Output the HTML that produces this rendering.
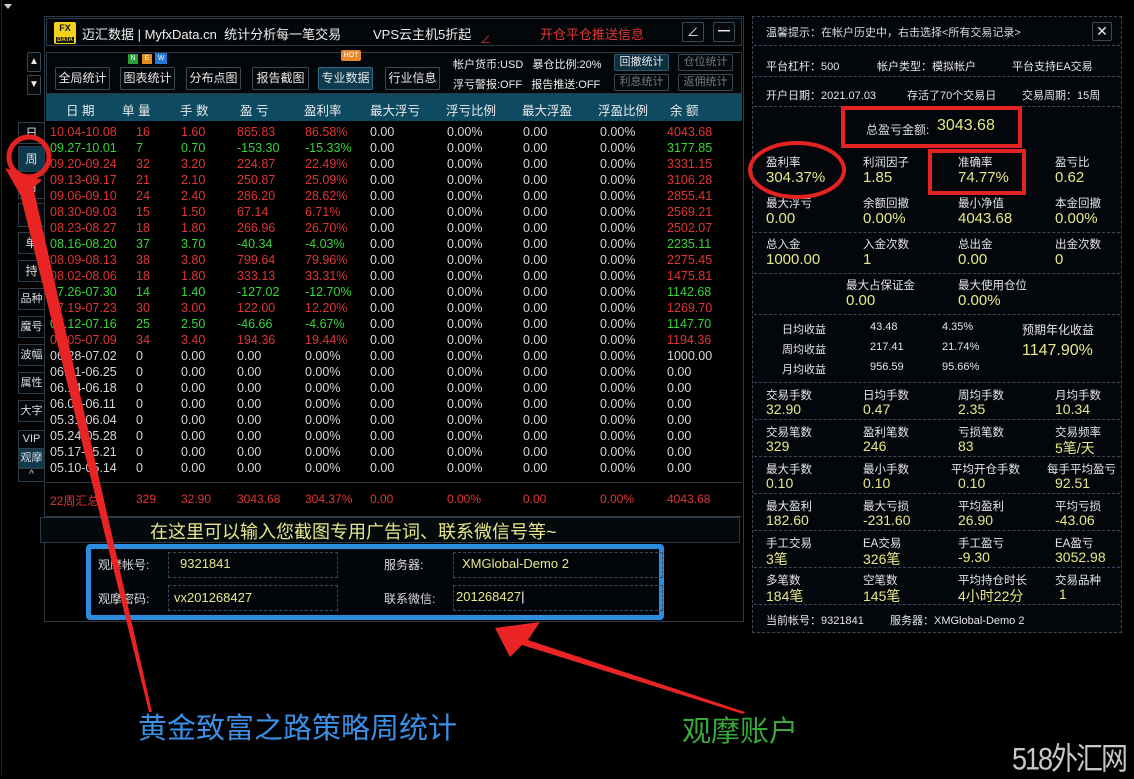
<!DOCTYPE html>
<html><head><meta charset="utf-8">
<style>
*{margin:0;padding:0;box-sizing:border-box}
body{width:1134px;height:775px;background:#000;position:relative;overflow:hidden;font-family:"Liberation Sans","Noto Sans CJK SC",sans-serif;color:#ddd}
.a{position:absolute;white-space:nowrap}
.btn{position:absolute;border:1px solid #3a4a55;background:#06090c;color:#e8e8e8;font-size:12px;text-align:center;border-radius:2px;white-space:nowrap}
.sb{position:absolute;left:18px;width:27px;border:1px solid #2f3d48;background:#05080b;color:#ddd;font-size:12px;text-align:center;white-space:nowrap}
.row{position:absolute;left:50px;width:690px;height:16px;font-size:12.5px;white-space:nowrap}
.row span{position:absolute;top:0;white-space:nowrap}
.R{color:#e03535}.G{color:#3ad43a}.W{color:#d8d8d8}
.sec{position:absolute;left:754px;width:366px;border-bottom:1px dashed #3c4a58}
.lb{position:absolute;font-size:11.5px;color:#e6e6e6;white-space:nowrap}
.v{position:absolute;font-size:15px;color:#e8e88a;white-space:nowrap}
.sm{position:absolute;font-size:11px;color:#e6e6e6;white-space:nowrap}
</style></head><body>

<div class="a" style="left:4px;top:4px;width:0;height:0;border-left:4px solid transparent;border-right:4px solid transparent;border-top:5px solid #ccc"></div>
<div class="a" style="left:1px;top:0;width:1px;height:775px;background:#222"></div>
<div class="a" style="left:44px;top:16px;width:700px;height:606px;border:1px solid #2b3a45"></div>
<div class="a" style="left:46px;top:18px;width:696px;height:28px;border:1px solid #2b3a45;background:#04070a"></div>
<div class="a" style="left:54px;top:22px;width:22px;height:22px;background:#f2d21a;border-radius:2px;font-size:9px;font-weight:bold;color:#111;text-align:center;line-height:10px;padding-top:1px">FX<br><span style="font-size:6px;background:#111;color:#f2d21a;padding:0 1px">DATA</span></div>
<div class="a" style="left:82px;top:24px;font-size:13px;color:#eee">迈汇数据 | MyfxData.cn&nbsp; 统计分析每一笔交易</div>
<div class="a" style="left:373px;top:24px;font-size:13px;color:#eee">VPS云主机5折起</div>
<div class="a" style="left:480px;top:31px;font-size:11px;color:#e03535">∠</div>
<div class="a" style="left:540px;top:24px;font-size:13px;color:#e03535">开仓平仓推送信息</div>
<div class="btn" style="left:682px;top:22px;width:22px;height:20px;line-height:18px">∠</div>
<div class="btn" style="left:713px;top:22px;width:22px;height:20px;line-height:16px;font-weight:bold">━</div>

<div class="a" style="left:46px;top:52px;width:696px;height:42px;border:1px solid #2b3a45;background:#04070a"></div>
<div class="btn" style="left:27px;top:52px;width:14px;height:20px;font-size:10px;line-height:18px">▲</div>
<div class="btn" style="left:27px;top:75px;width:14px;height:20px;font-size:10px;line-height:18px">▼</div>
<div class="btn" style="left:55px;top:67px;width:55px;height:23px;line-height:21px">全局统计</div>
<div class="a" style="left:128px;top:54px;width:10px;height:10px;background:#2e9b3a;font-size:7px;color:#fff;text-align:center;line-height:10px">N</div>
<div class="a" style="left:142px;top:54px;width:10px;height:10px;background:#e08a1f;font-size:7px;color:#fff;text-align:center;line-height:10px">E</div>
<div class="a" style="left:155px;top:53px;width:12px;height:11px;background:#2878d8;font-size:7px;color:#fff;text-align:center;line-height:11px">W</div>
<div class="btn" style="left:120px;top:67px;width:55px;height:23px;line-height:21px">图表统计</div>
<div class="btn" style="left:186px;top:67px;width:55px;height:23px;line-height:21px">分布点图</div>
<div class="btn" style="left:252px;top:67px;width:57px;height:23px;line-height:21px">报告截图</div>
<div class="a" style="left:341px;top:50px;width:20px;height:11px;background:#e88a2a;font-size:7px;color:#fff;text-align:center;line-height:11px;border-radius:2px">HOT</div>
<div class="btn" style="left:318px;top:67px;width:55px;height:23px;line-height:21px;background:#0d3a4e;border-color:#2f6a80">专业数据</div>
<div class="btn" style="left:385px;top:67px;width:55px;height:23px;line-height:21px">行业信息</div>
<div class="a" style="left:453px;top:56px;font-size:11px;color:#eee">帐户货币:USD&nbsp;&nbsp; 暴仓比例:20%</div>
<div class="a" style="left:453px;top:76px;font-size:11px;color:#eee">浮亏警报:OFF&nbsp;&nbsp; 报告推送:OFF</div>
<div class="btn" style="left:614px;top:54px;width:55px;height:17px;font-size:11px;line-height:15px;background:#0d2f40;border-color:#2f5a70">回撤统计</div>
<div class="btn" style="left:678px;top:54px;width:55px;height:17px;font-size:11px;line-height:15px;color:#777">仓位统计</div>
<div class="btn" style="left:614px;top:74px;width:55px;height:17px;font-size:11px;line-height:15px;color:#777">利息统计</div>
<div class="btn" style="left:678px;top:74px;width:55px;height:17px;font-size:11px;line-height:15px;color:#777">返佣统计</div>

<div class="a" style="left:46px;top:94px;width:696px;height:27px;background:#0e4b62"></div>
<div class="a" style="left:46px;top:100px;width:696px;font-size:12.5px;color:#e8e8e8">
<span class="a" style="left:20px">日 期</span><span class="a" style="left:76px">单 量</span><span class="a" style="left:134px">手 数</span><span class="a" style="left:194px">盈 亏</span><span class="a" style="left:258px">盈利率</span><span class="a" style="left:324px">最大浮亏</span><span class="a" style="left:400px">浮亏比例</span><span class="a" style="left:476px">最大浮盈</span><span class="a" style="left:552px">浮盈比例</span><span class="a" style="left:624px">余 额</span></div>
<div class="a" style="left:46px;top:121px;width:696px;height:362px;border-bottom:1px solid #2b3a45"></div>
<div class="a" style="left:46px;top:483px;width:696px;height:34px;border-bottom:1px solid #2b3a45"></div>

<div id="rows"></div>
<div class="row R" style="top:492px;font-size:12px"><span style="left:0">22周汇总</span><span style="left:86px">329</span><span style="left:131px">32.90</span><span style="left:187px">3043.68</span><span style="left:255px">304.37%</span><span style="left:320px">0.00</span><span style="left:397px">0.00%</span><span style="left:473px">0.00</span><span style="left:550px">0.00%</span><span style="left:617px">4043.68</span></div>

<div class="sb" style="top:122px;height:22px;line-height:20px">日</div>
<div class="sb" style="top:146px;height:26px;line-height:24px;background:#0d3a4e">周</div>
<div class="sb" style="top:175px;height:24px;line-height:22px">月</div>
<div class="sb" style="top:203px;height:24px;line-height:22px">年</div>
<div class="sb" style="top:232px;height:22px;line-height:20px">单</div>
<div class="sb" style="top:260px;height:22px;line-height:20px">持</div>
<div class="sb" style="top:288px;height:22px;line-height:20px;font-size:11px">品种</div>
<div class="sb" style="top:316px;height:22px;line-height:20px;font-size:11px">魔号</div>
<div class="sb" style="top:344px;height:22px;line-height:20px;font-size:11px">波幅</div>
<div class="sb" style="top:372px;height:22px;line-height:20px;font-size:11px">属性</div>
<div class="sb" style="top:400px;height:22px;line-height:20px;font-size:11px">大字</div>
<div class="sb" style="top:430px;height:18px;line-height:16px;font-size:11px;border-bottom:none">VIP</div>
<div class="sb" style="top:448px;height:20px;line-height:18px;font-size:11px;background:#0d3a4e">观摩</div>
<div class="sb" style="top:468px;height:14px;line-height:12px;font-size:10px">^</div>

<div class="a" style="left:40px;top:517px;width:700px;height:26px;border:1px solid #2b3a45;background:#04090c"></div>
<div class="a" style="left:150px;top:518px;font-size:18px;color:#e8e88a">在这里可以输入您截图专用广告词、联系微信号等~</div>
<div class="a" style="left:86px;top:544px;width:578px;height:76px;border:5px solid #2b8de0;border-radius:4px;background:#02050a"></div>
<div class="a" style="left:98px;top:556px;font-size:12px;color:#ddd">观摩帐号:</div>
<div class="a" style="left:98px;top:590px;font-size:12px;color:#ddd">观摩密码:</div>
<div class="a" style="left:168px;top:552px;width:170px;height:26px;border:1px dashed #3c4a58"></div>
<div class="a" style="left:168px;top:585px;width:170px;height:26px;border:1px dashed #3c4a58"></div>
<div class="a" style="left:180px;top:556px;font-size:13px;color:#e8e88a">9321841</div>
<div class="a" style="left:174px;top:590px;font-size:13px;color:#e8e88a">vx201268427</div>
<div class="a" style="left:384px;top:556px;font-size:12px;color:#ddd">服务器:</div>
<div class="a" style="left:384px;top:590px;font-size:12px;color:#ddd">联系微信:</div>
<div class="a" style="left:453px;top:552px;width:210px;height:26px;border:1px dashed #3c4a58"></div>
<div class="a" style="left:453px;top:585px;width:210px;height:26px;border:1px dashed #3c4a58"></div>
<div class="a" style="left:462px;top:556px;font-size:13px;color:#e8e88a">XMGlobal-Demo 2</div>
<div class="a" style="left:456px;top:589px;font-size:13px;color:#e8e88a">201268427<span style="color:#fff">|</span></div>

<div class="a" style="left:752px;top:16px;width:370px;height:617px;border:1px dashed #3c4a58;background:#03060a"></div>
<div class="a" style="left:766px;top:24px;font-size:11px">温馨提示：在帐户历史中，右击选择&lt;所有交易记录&gt;</div>
<div class="btn" style="left:1092px;top:22px;width:20px;height:19px;line-height:17px;font-size:14px">✕</div>
<div class="sec" style="top:16px;height:30px"></div>
<div class="sec" style="top:46px;height:31px"></div>
<div class="sm" style="left:766px;top:58px">平台杠杆：500</div>
<div class="sm" style="left:877px;top:58px">帐户类型：模拟帐户</div>
<div class="sm" style="left:1012px;top:58px">平台支持EA交易</div>
<div class="sec" style="top:77px;height:30px"></div>
<div class="sm" style="left:766px;top:87px">开户日期：2021.07.03</div>
<div class="sm" style="left:907px;top:87px">存活了70个交易日</div>
<div class="sm" style="left:1022px;top:87px">交易周期：15周</div>
<div class="a" style="left:866px;top:121px;font-size:12px">总盈亏金额:</div>
<div class="a" style="left:937px;top:117px;font-size:16px;color:#e8e88a">3043.68</div>

<div class="lb" style="left:766px;top:154px">盈利率</div><div class="v" style="left:766px;top:169px">304.37%</div>
<div class="lb" style="left:863px;top:154px">利润因子</div><div class="v" style="left:863px;top:169px">1.85</div>
<div class="lb" style="left:958px;top:154px">准确率</div><div class="v" style="left:958px;top:169px">74.77%</div>
<div class="lb" style="left:1055px;top:154px">盈亏比</div><div class="v" style="left:1055px;top:169px">0.62</div>
<div class="sec" style="top:107px;height:126px"></div>
<div class="lb" style="left:766px;top:195px">最大浮亏</div><div class="v" style="left:766px;top:210px">0.00</div>
<div class="lb" style="left:863px;top:195px">余额回撤</div><div class="v" style="left:863px;top:210px">0.00%</div>
<div class="lb" style="left:958px;top:195px">最小净值</div><div class="v" style="left:958px;top:210px">4043.68</div>
<div class="lb" style="left:1055px;top:195px">本金回撤</div><div class="v" style="left:1055px;top:210px">0.00%</div>
<div class="sec" style="top:233px;height:41px"></div>
<div class="lb" style="left:766px;top:236px">总入金</div><div class="v" style="left:766px;top:251px">1000.00</div>
<div class="lb" style="left:863px;top:236px">入金次数</div><div class="v" style="left:863px;top:251px">1</div>
<div class="lb" style="left:958px;top:236px">总出金</div><div class="v" style="left:958px;top:251px">0.00</div>
<div class="lb" style="left:1055px;top:236px">出金次数</div><div class="v" style="left:1055px;top:251px">0</div>
<div class="sec" style="top:274px;height:41px"></div>
<div class="lb" style="left:846px;top:277px">最大占保证金</div><div class="v" style="left:846px;top:292px">0.00</div>
<div class="lb" style="left:958px;top:277px">最大使用仓位</div><div class="v" style="left:958px;top:292px">0.00%</div>
<div class="sec" style="top:315px;height:68px"></div>
<div class="sm" style="left:782px;top:321px">日均收益</div><div class="sm" style="left:870px;top:321px">43.48</div><div class="sm" style="left:942px;top:321px">4.35%</div>
<div class="sm" style="left:782px;top:341px">周均收益</div><div class="sm" style="left:870px;top:341px">217.41</div><div class="sm" style="left:942px;top:341px">21.74%</div>
<div class="sm" style="left:782px;top:361px">月均收益</div><div class="sm" style="left:870px;top:361px">956.59</div><div class="sm" style="left:942px;top:361px">95.66%</div>
<div class="sm" style="left:1022px;top:321px;font-size:12px">预期年化收益</div>
<div class="v" style="left:1022px;top:342px;font-size:16px">1147.90%</div>

<div id="stats"></div>
<div class="sm" style="left:766px;top:612px">当前帐号：9321841</div>
<div class="sm" style="left:890px;top:612px">服务器：XMGlobal-Demo 2</div>

<div class="a" style="left:138px;top:705px;font-size:29px;color:#3a8fe6">黄金致富之路策略周统计</div>
<div class="a" style="left:682px;top:708px;font-size:29px;color:#3aa83a">观摩账户</div>
<div class="a" style="left:1012px;top:737px;font-size:27px;color:#c8c8c8;letter-spacing:-2px;transform:scaleY(1.15)">518外汇网</div>
<svg class="a" style="left:0;top:0" width="1134" height="775">
<circle cx="29" cy="157" r="20" fill="none" stroke="#e52222" stroke-width="5"/>
<ellipse cx="797" cy="170" rx="47" ry="27" fill="none" stroke="#e52222" stroke-width="4"/>
<rect x="843" y="108" width="177" height="38" fill="none" stroke="#e52222" stroke-width="4"/>
<rect x="930" y="151" width="94" height="42" fill="none" stroke="#e52222" stroke-width="4"/>
<polygon points="18,185 32,182 152,712 149,712" fill="#ea2424"/>
<polygon points="5,168 42,180 22,198" fill="#ea2424"/>
<polygon points="495,628 540,622 528,640 745,712 743,714 522,645 510,657" fill="#ea2424"/>
</svg>

<script>
var d=[["10.04-10.08",16,"1.60","865.83","86.58%","4043.68","R"],["09.27-10.01",7,"0.70","-153.30","-15.33%","3177.85","G"],["09.20-09.24",32,"3.20","224.87","22.49%","3331.15","R"],["09.13-09.17",21,"2.10","250.87","25.09%","3106.28","R"],["09.06-09.10",24,"2.40","286.20","28.62%","2855.41","R"],["08.30-09.03",15,"1.50","67.14","6.71%","2569.21","R"],["08.23-08.27",18,"1.80","266.96","26.70%","2502.07","R"],["08.16-08.20",37,"3.70","-40.34","-4.03%","2235.11","G"],["08.09-08.13",38,"3.80","799.64","79.96%","2275.45","R"],["08.02-08.06",18,"1.80","333.13","33.31%","1475.81","R"],["07.26-07.30",14,"1.40","-127.02","-12.70%","1142.68","G"],["07.19-07.23",30,"3.00","122.00","12.20%","1269.70","R"],["07.12-07.16",25,"2.50","-46.66","-4.67%","1147.70","G"],["07.05-07.09",34,"3.40","194.36","19.44%","1194.36","R"],["06.28-07.02",0,"0.00","0.00","0.00%","1000.00","W"],["06.21-06.25",0,"0.00","0.00","0.00%","0.00","W"],["06.14-06.18",0,"0.00","0.00","0.00%","0.00","W"],["06.07-06.11",0,"0.00","0.00","0.00%","0.00","W"],["05.31-06.04",0,"0.00","0.00","0.00%","0.00","W"],["05.24-05.28",0,"0.00","0.00","0.00%","0.00","W"],["05.17-05.21",0,"0.00","0.00","0.00%","0.00","W"],["05.10-05.14",0,"0.00","0.00","0.00%","0.00","W"]];
var h="";d.forEach(function(r,i){var c=r[6];h+='<div class="row '+c+'" style="top:'+(125+i*16)+'px"><span style="left:0">'+r[0]+'</span><span style="left:86px">'+r[1]+'</span><span style="left:131px">'+r[2]+'</span><span style="left:187px">'+r[3]+'</span><span style="left:255px">'+r[4]+'</span><span class="W" style="left:320px">0.00</span><span class="W" style="left:397px">0.00%</span><span class="W" style="left:473px">0.00</span><span class="W" style="left:550px">0.00%</span><span style="left:617px">'+r[5]+'</span></div>';});
document.getElementById("rows").innerHTML=h;
var s=[[["交易手数","32.90"],["日均手数","0.47"],["周均手数","2.35"],["月均手数","10.34"]],[["交易笔数","329"],["盈利笔数","246"],["亏损笔数","83"],["交易频率","5笔/天"]],[["最大手数","0.10"],["最小手数","0.10"],["平均开仓手数","0.10"],["每手平均盈亏","92.51"]],[["最大盈利","182.60"],["最大亏损","-231.60"],["平均盈利","26.90"],["平均亏损","-43.06"]],[["手工交易","3笔"],["EA交易","326笔"],["手工盈亏","-9.30"],["EA盈亏","3052.98"]],[["多笔数","184笔"],["空笔数","145笔"],["平均持仓时长","4小时22分"],["交易品种","&nbsp;1"]]];
var xs=[766,863,958,1055],g="";
s.forEach(function(r,i){var t=387+i*37;g+='<div class="sec" style="top:'+(383+i*37)+'px;height:37px"></div>';r.forEach(function(c,j){var x=xs[j];if(i==2&&j==2)x=951;if(i==2&&j==3)x=1047;g+='<div class="lb" style="left:'+x+'px;top:'+t+'px">'+c[0]+'</div><div class="v" style="left:'+(i==2&&j>1?xs[j]:x)+'px;top:'+(t+14)+'px;font-size:14px">'+c[1]+'</div>';});});
document.getElementById("stats").innerHTML=g;
</script>
</body></html>
